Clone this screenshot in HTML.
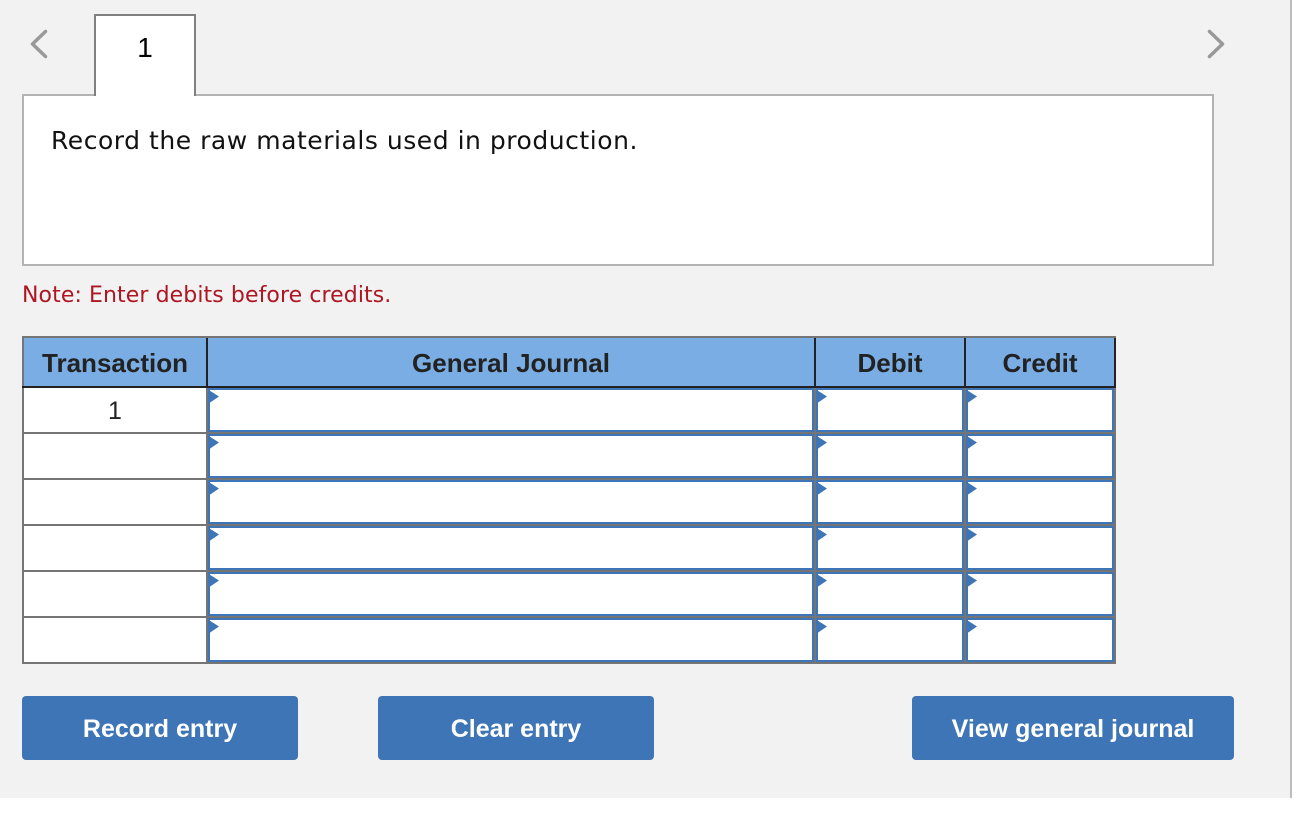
<!DOCTYPE html>
<html>
<head>
<meta charset="utf-8">
<style>
html,body{margin:0;padding:0;background:#fff;}
body{position:relative;width:1300px;height:814px;overflow:hidden;font-family:"Liberation Sans",sans-serif;}
div{position:absolute;box-sizing:border-box;}
.bg{left:0;top:0;width:1290px;height:798px;background:#f2f2f2;}
.rb{left:1290px;top:0;width:2px;height:798px;background:#bdbdbd;}
.box{left:22px;top:94px;width:1192px;height:172px;background:#fff;border:2px solid #b3b3b3;}
.tab{left:94px;top:14px;width:102px;height:82px;background:#fff;border:2px solid #808080;border-bottom:none;text-align:center;font:28px/63px "Liberation Sans",sans-serif;color:#000;}
.q{left:51px;top:125px;font:25px/32px "DejaVu Sans",sans-serif;letter-spacing:.53px;color:#111;white-space:nowrap;}
.n{left:22px;top:282px;font:22px/28px "DejaVu Sans",sans-serif;letter-spacing:.09px;color:#ad1622;white-space:nowrap;}
.tbl{left:22px;top:336px;width:1094px;height:328px;background:#757575;}
.h{top:338px;height:48px;background:#7aade3;text-align:center;font-weight:bold;font-size:26px;line-height:50px;color:#222;}
.dk{background:#222;}
.c{background:#fff;left:24px;width:182px;height:44px;}
.i{background:#fff;border:2px solid #3d75b6;height:44px;}
svg{position:absolute;overflow:visible;}
.b{top:696px;height:64px;background:#3d75b6;border-radius:4px;color:#fff;font-weight:bold;font-size:25px;line-height:67px;text-align:center;}
</style>
</head>
<body>
<div class="bg"></div>
<div class="rb"></div>
<div class="box"></div>
<div class="tab">1</div>
<svg style="left:0;top:0" width="1300" height="814">
<path d="M45.500 31.500L32.500 44L45.500 56.500" fill="none" stroke="#999" stroke-width="3.500" stroke-linecap="round" stroke-linejoin="round"/>
<path d="M1209.500 31.500L1222.500 44L1209.500 56.500" fill="none" stroke="#999" stroke-width="3.500" stroke-linecap="round" stroke-linejoin="round"/>
</svg>
<div class="q">Record the raw materials used in production.</div>
<div class="n">Note: Enter debits before credits.</div>
<div class="tbl"></div>
<div class="h" style="left:24px;width:182px">Transaction</div>
<div class="h" style="left:208px;width:606px">General Journal</div>
<div class="h" style="left:816px;width:148px">Debit</div>
<div class="h" style="left:966px;width:148px">Credit</div>
<div class="dk" style="left:206px;top:338px;width:2px;height:50px"></div>
<div class="dk" style="left:814px;top:338px;width:2px;height:50px"></div>
<div class="dk" style="left:964px;top:338px;width:2px;height:50px"></div>
<div class="dk" style="left:1114px;top:338px;width:2px;height:50px"></div>
<div class="dk" style="left:22px;top:386px;width:1094px;height:2px"></div>

<div class="c" style="top:388px;text-align:center;font-size:25px;line-height:47px;color:#222">1</div>
<div class="i" style="left:208px;top:388px;width:606px"></div>
<div class="i" style="left:816px;top:388px;width:148px"></div>
<div class="i" style="left:966px;top:388px;width:148px"></div>

<div class="c" style="top:434px"></div>
<div class="i" style="left:208px;top:434px;width:606px"></div>
<div class="i" style="left:816px;top:434px;width:148px"></div>
<div class="i" style="left:966px;top:434px;width:148px"></div>

<div class="c" style="top:480px"></div>
<div class="i" style="left:208px;top:480px;width:606px"></div>
<div class="i" style="left:816px;top:480px;width:148px"></div>
<div class="i" style="left:966px;top:480px;width:148px"></div>

<div class="c" style="top:526px"></div>
<div class="i" style="left:208px;top:526px;width:606px"></div>
<div class="i" style="left:816px;top:526px;width:148px"></div>
<div class="i" style="left:966px;top:526px;width:148px"></div>

<div class="c" style="top:572px"></div>
<div class="i" style="left:208px;top:572px;width:606px"></div>
<div class="i" style="left:816px;top:572px;width:148px"></div>
<div class="i" style="left:966px;top:572px;width:148px"></div>

<div class="c" style="top:618px"></div>
<div class="i" style="left:208px;top:618px;width:606px"></div>
<div class="i" style="left:816px;top:618px;width:148px"></div>
<div class="i" style="left:966px;top:618px;width:148px"></div>

<svg style="left:0;top:0" width="1300" height="814" fill="#3d75b6">
<path d="M208 389.500L219 396.500L208 404ZM816 389.500L827 396.500L816 404ZM966 389.500L977 396.500L966 404Z"/>
<path d="M208 435.500L219 442.500L208 450ZM816 435.500L827 442.500L816 450ZM966 435.500L977 442.500L966 450Z"/>
<path d="M208 481.500L219 488.500L208 496ZM816 481.500L827 488.500L816 496ZM966 481.500L977 488.500L966 496Z"/>
<path d="M208 527.500L219 534.500L208 542ZM816 527.500L827 534.500L816 542ZM966 527.500L977 534.500L966 542Z"/>
<path d="M208 573.500L219 580.500L208 588ZM816 573.500L827 580.500L816 588ZM966 573.500L977 580.500L966 588Z"/>
<path d="M208 619.500L219 626.500L208 634ZM816 619.500L827 626.500L816 634ZM966 619.500L977 626.500L966 634Z"/>
</svg>

<div class="b" style="left:22px;width:276px">Record entry</div>
<div class="b" style="left:378px;width:276px">Clear entry</div>
<div class="b" style="left:912px;width:322px">View general journal</div>
</body>
</html>
